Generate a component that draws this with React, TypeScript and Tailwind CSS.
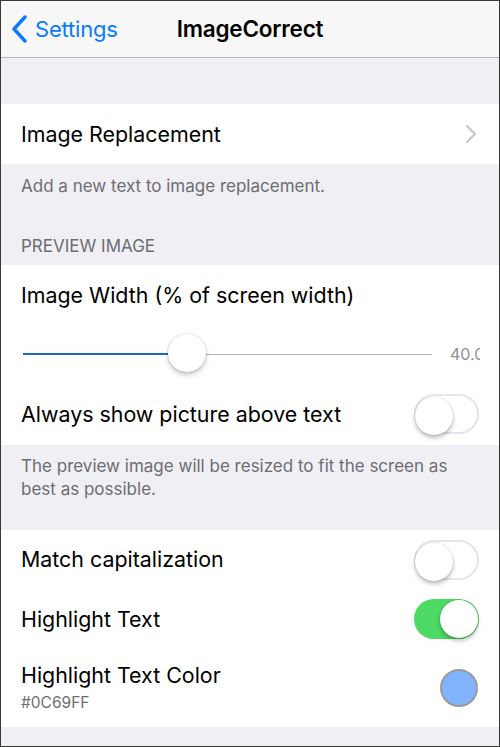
import React from 'react';

const font = { fontFamily: 'Inter, "Noto Sans", sans-serif' };

function Toggle({ on }: { on: boolean }) {
  return (
    <div
      className={`relative w-[65px] h-[40px] rounded-full shrink-0 ${
        on ? 'bg-[#4cd964]' : 'bg-white border-2 border-[#e5e5ea]'
      }`}
    >
      <div
        className={`absolute top-[1px] w-[38px] h-[38px] rounded-full bg-white shadow-[0_3px_4px_rgba(0,0,0,0.25),0_0_0_1px_rgba(0,0,0,0.06)] ${
          on ? 'right-[1px]' : '-left-[1px] -top-[1px]'
        }`}
      />
    </div>
  );
}

function Row({ children, right, className = '' }: { children: React.ReactNode; right?: React.ReactNode; className?: string }) {
  return (
    <div className={`flex items-center justify-between pl-[20px] pr-[20px] ${className}`}>
      <div className="min-w-0">{children}</div>
      {right}
    </div>
  );
}

export default function App() {
  return (
    <div className="w-[500px] h-[747px] overflow-hidden border border-[#3a3a3a] bg-[#efeff4] flex flex-col" style={font}>
      {/* nav bar */}
      <header className="h-[57px] shrink-0 bg-[#f7f7f7] border-b border-[#b8b8bc] relative flex items-center">
        <div className="flex items-center pl-[10px] text-[#0a7aff]">
          <svg width="18" height="28" viewBox="0 0 18 28" fill="none">
            <path d="M14 2 L3 14 L14 26" stroke="#0a7aff" strokeWidth="3.4" strokeLinecap="round" strokeLinejoin="round" />
          </svg>
          <span className="ml-[6px] text-[22px] leading-none tracking-[-0.2px]">Settings</span>
        </div>
        <div className="absolute inset-x-0 top-0 h-full flex items-center justify-center pointer-events-none">
          <span className="text-[22.5px] font-semibold text-black tracking-[-0.2px]">ImageCorrect</span>
        </div>
      </header>

      <div className="h-[46px] shrink-0" />

      {/* image replacement */}
      <div className="bg-white h-[60px] shrink-0">
        <Row
          className="h-full"
          right={
            <svg width="12" height="20" viewBox="0 0 12 20" fill="none" className="mr-[2px]">
              <path d="M2 2 L10 10 L2 18" stroke="#c7c7cc" strokeWidth="2.2" strokeLinecap="round" strokeLinejoin="round" />
            </svg>
          }
        >
          <span className="text-[21.4px] text-black">Image Replacement</span>
        </Row>
      </div>
      <div className="h-[101px] shrink-0 px-[20px] pt-[11px] text-[17px] text-[#6d6d72] leading-[22px]">
        <p>Add a new text to image replacement.</p>
        <p className="mt-[38px] uppercase">Preview Image</p>
      </div>

      {/* preview image section */}
      <div className="bg-white h-[180px] shrink-0 flex flex-col">
        <div className="h-[60px] flex items-center px-[20px]">
          <span className="text-[21.4px] text-black">Image Width (% of screen width)</span>
        </div>
        <div className="h-[58px] flex items-center pl-[22px] relative">
          <div className="flex items-center w-[409px] relative">
            <div className="h-[2px] w-[163px] bg-[#1a6ac4]" />
            <div className="h-[1px] flex-1 bg-[#b4b4b4]" />
            <div className="absolute left-[145px] top-[-19px] w-[38px] h-[38px] rounded-full bg-white shadow-[0_3px_5px_rgba(0,0,0,0.22),0_0_0_1px_rgba(0,0,0,0.07)]" />
          </div>
          <div className="ml-[18px] w-[30px] overflow-hidden whitespace-nowrap text-[16px] text-[#8e8e93]">40.00</div>
        </div>
        <Row className="h-[62px]" right={<Toggle on={false} />}>
          <span className="text-[21.4px] text-black">Always show picture above text</span>
        </Row>
      </div>
      <div className="h-[85px] shrink-0 pl-[20px] pr-[40px] pt-[10px] text-[17px] text-[#6d6d72] leading-[23px]">
        The preview image will be resized to fit the screen as best as possible.
      </div>

      {/* highlight section */}
      <div className="bg-white h-[197px] shrink-0 flex flex-col">
        <Row className="h-[59px]" right={<Toggle on={false} />}>
          <span className="text-[21.4px] text-black">Match capitalization</span>
        </Row>
        <Row className="h-[60px]" right={<Toggle on={true} />}>
          <span className="text-[21.4px] text-black">Highlight Text</span>
        </Row>
        <Row
          className="h-[78px]"
          right={<div className="w-[38px] h-[38px] rounded-full bg-[#80b4ff] border-2 border-[#9a9a9a] mr-[1px]" />}
        >
          <div className="text-[21.4px] text-black leading-[26px]">Highlight Text Color</div>
          <div className="text-[15.5px] text-[#6d6d72] mt-[3px]">#0C69FF</div>
        </Row>
      </div>
    </div>
  );
}
